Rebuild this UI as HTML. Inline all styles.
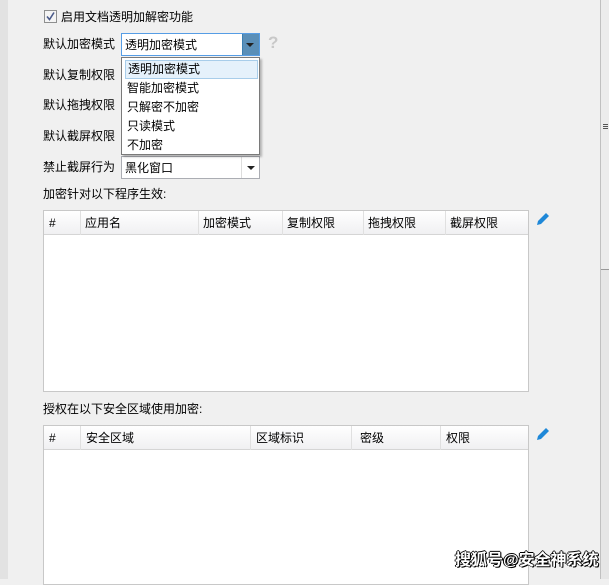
<!DOCTYPE html>
<html><head><meta charset="utf-8"><style>
*{margin:0;padding:0;box-sizing:border-box}
body{width:609px;height:579px;background:#f0f0f0;position:relative;overflow:hidden;font-family:"Liberation Sans","Noto Sans CJK SC",sans-serif;font-size:12px;color:#000}
.a{position:absolute;white-space:nowrap;line-height:16px}
.combo{position:absolute;background:#fff;border:1px solid #abadb3}
.arrow{position:absolute;width:0;height:0;border-left:4px solid transparent;border-right:4px solid transparent;border-top:4px solid #222}
.tbl{position:absolute;background:#fff;border:1px solid #c8c8c8}
.hdr{position:absolute;left:0;right:0;top:0;height:24px;background:linear-gradient(#fff,#f0f0f2);border-bottom:1px solid #d5d5d5}
.dv{position:absolute;top:0;height:24px;width:1px;background:#e0e0e0}
.hdr span{position:absolute;top:4px;line-height:16px;font-size:12px}
.item{position:absolute;left:3px;width:133px;height:19px;line-height:19px;padding-left:2px}
</style></head><body>
<div style="position:absolute;left:0;top:0;width:8px;height:579px;background:#e2e2e2"></div>
<div style="position:absolute;left:600px;top:0;width:9px;height:579px;background:#e6e6e6;border-left:1px solid #c0c0c0"></div>
<div style="position:absolute;left:601px;top:0;width:8px;height:270px;background:#ececec;border-bottom:1px solid #999"></div>
<div style="position:absolute;left:603px;top:124px;width:5px;height:1px;background:#555;box-shadow:0 2px #555,0 4px #555"></div>

<div style="position:absolute;left:44px;top:10px;width:13px;height:13px;border:1px solid #8e8f8f;background:#f4f4f4"></div>
<svg style="position:absolute;left:45px;top:11px" width="11" height="11"><path d="M2 5.5 L4.5 8.5 L9 1.5" stroke="#4a5a8a" stroke-width="1.6" fill="none"/></svg>
<div class="a" style="left:61px;top:9px">启用文档透明加解密功能</div>

<div class="a" style="left:43px;top:36px">默认加密模式</div>
<div class="a" style="left:43px;top:67px">默认复制权限</div>
<div class="a" style="left:43px;top:97px">默认拖拽权限</div>
<div class="a" style="left:43px;top:128px">默认截屏权限</div>
<div class="a" style="left:43px;top:159px">禁止截屏行为</div>

<div class="combo" style="left:121px;top:33px;width:139px;height:23px;border-color:#569de5">
<div class="a" style="left:3px;top:3px">透明加密模式</div>
<div style="position:absolute;right:0;top:0;width:17px;height:21px;background:#5a8fb8;border-left:1px solid #3c7fb1"></div>
<div class="arrow" style="right:5px;top:9px"></div></div>
<div class="a" style="left:268px;top:33px;color:#c8c8c8;font-weight:bold;font-size:17px;line-height:20px">?</div>

<div class="combo" style="left:121px;top:156px;width:139px;height:23px">
<div class="a" style="left:3px;top:3px">黑化窗口</div>
<div style="position:absolute;right:17px;top:0;width:1px;height:21px;background:#ddd"></div>
<div class="arrow" style="right:4px;top:9px"></div></div>

<div style="position:absolute;left:121px;top:57px;width:139px;height:98px;background:#fff;border:1px solid #7a7a7a;box-shadow:2px 2px 2px rgba(0,0,0,.25)">
<div class="item" style="top:2px;background:#e5f1fb;border:1px solid #a8cdea;line-height:17px">透明加密模式</div>
<div class="item" style="top:21px">智能加密模式</div>
<div class="item" style="top:40px">只解密不加密</div>
<div class="item" style="top:59px">只读模式</div>
<div class="item" style="top:78px">不加密</div>
</div>

<div class="a" style="left:43px;top:186px">加密针对以下程序生效:</div>
<div class="tbl" style="left:43px;top:210px;width:486px;height:182px"><div class="hdr">
<span style="left:5px">#</span><div class="dv" style="left:36px"></div>
<span style="left:41px">应用名</span><div class="dv" style="left:154px"></div>
<span style="left:159px">加密模式</span><div class="dv" style="left:238px"></div>
<span style="left:243px">复制权限</span><div class="dv" style="left:319px"></div>
<span style="left:324px">拖拽权限</span><div class="dv" style="left:401px"></div>
<span style="left:406px">截屏权限</span></div></div>

<div class="a" style="left:43px;top:401px">授权在以下安全区域使用加密:</div>
<div class="tbl" style="left:43px;top:425px;width:486px;height:160px"><div class="hdr">
<span style="left:5px">#</span><div class="dv" style="left:36px"></div>
<span style="left:42px">安全区域</span><div class="dv" style="left:206px"></div>
<span style="left:212px">区域标识</span><div class="dv" style="left:307px"></div>
<span style="left:316px">密级</span><div class="dv" style="left:396px"></div>
<span style="left:402px">权限</span></div></div>

<svg style="position:absolute;left:535px;top:211px" width="16" height="16" viewBox="0 0 16 16"><path d="M2 14 L3 10 L11 2 L14 5 L6 13 Z" fill="#1e88d8"/></svg>
<svg style="position:absolute;left:535px;top:426px" width="16" height="16" viewBox="0 0 16 16"><path d="M2 14 L3 10 L11 2 L14 5 L6 13 Z" fill="#1e88d8"/></svg>

<div class="a" style="left:455px;top:551px;font-size:16px;line-height:20px;color:#fff;font-weight:bold;text-shadow:1px 1px 0 #000,-1px 0 0 #000,0 -1px 0 #000,1px 0 0 #000">搜狐号@安全神系统</div>
</body></html>
